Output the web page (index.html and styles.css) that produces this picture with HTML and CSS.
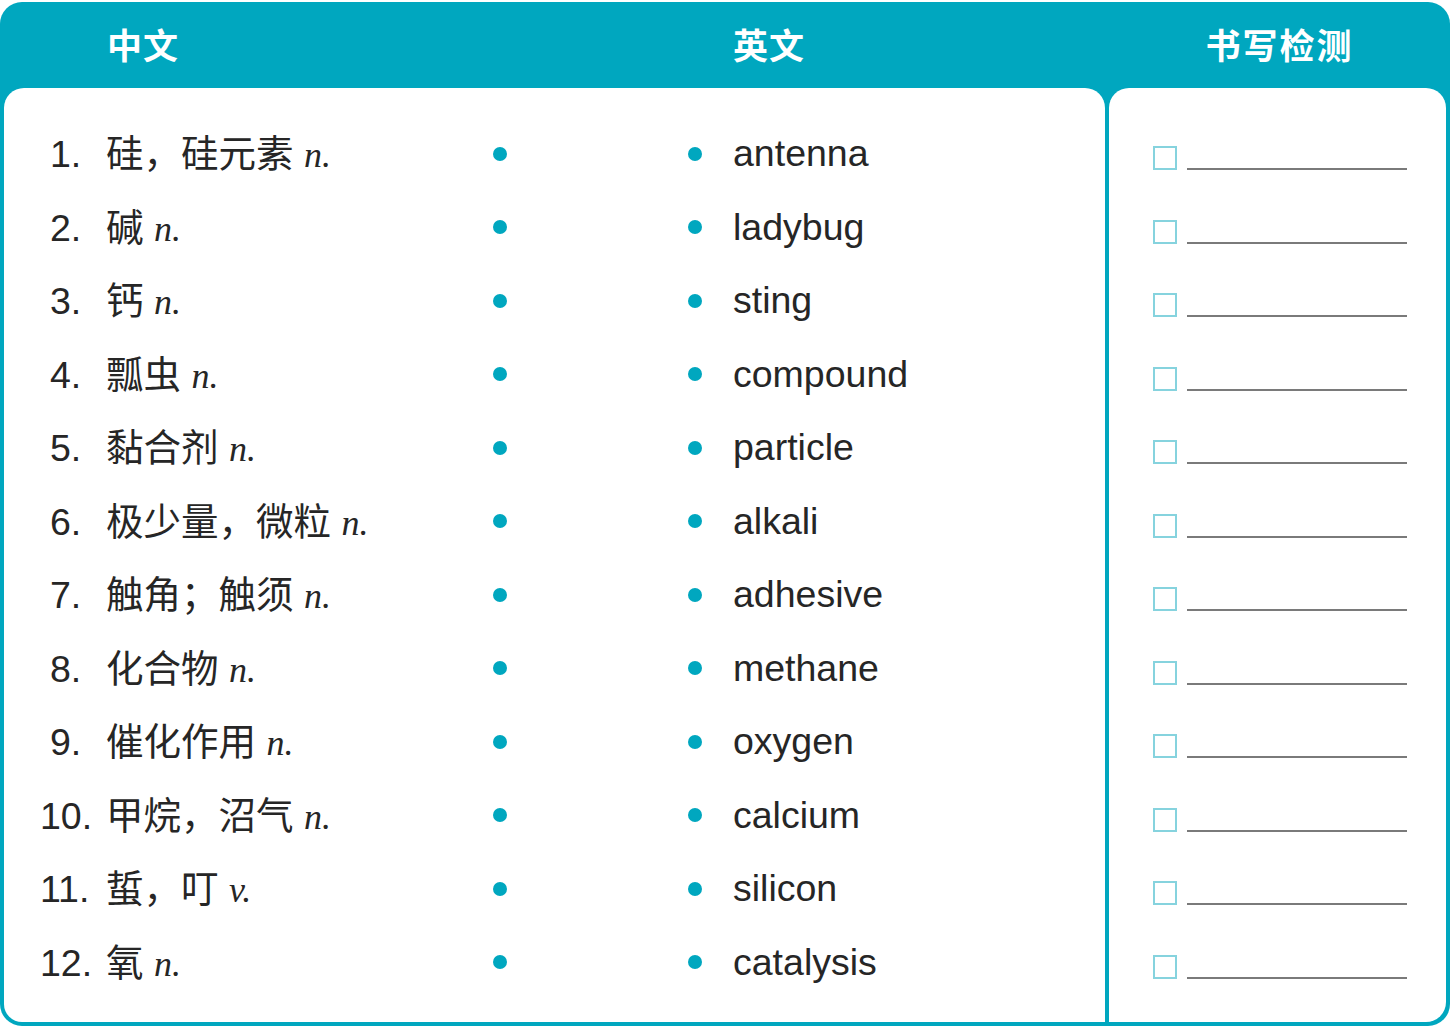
FILE: index.html
```html
<!DOCTYPE html>
<html lang="zh">
<head>
<meta charset="utf-8">
<title>词汇</title>
<link rel="stylesheet" href="styles.css">
</head>
<body>
<div class="card">
  <div class="head">
    <div class="head-left">
      <span class="h-cn">中文</span>
      <span class="h-en">英文</span>
    </div>
    <div class="head-right">书写检测</div>
  </div>
  <div class="body">
    <div class="panel left">
      <div class="row"><span class="cn"><span class="num one">1.</span>硅，硅元素 <i>n.</i></span><span class="dot"></span><span class="dot dot2"></span><span class="en">antenna</span></div>
      <div class="row"><span class="cn"><span class="num one">2.</span>碱 <i>n.</i></span><span class="dot"></span><span class="dot dot2"></span><span class="en">ladybug</span></div>
      <div class="row"><span class="cn"><span class="num one">3.</span>钙 <i>n.</i></span><span class="dot"></span><span class="dot dot2"></span><span class="en">sting</span></div>
      <div class="row"><span class="cn"><span class="num one">4.</span>瓢虫 <i>n.</i></span><span class="dot"></span><span class="dot dot2"></span><span class="en">compound</span></div>
      <div class="row"><span class="cn"><span class="num one">5.</span>黏合剂 <i>n.</i></span><span class="dot"></span><span class="dot dot2"></span><span class="en">particle</span></div>
      <div class="row"><span class="cn"><span class="num one">6.</span>极少量，微粒 <i>n.</i></span><span class="dot"></span><span class="dot dot2"></span><span class="en">alkali</span></div>
      <div class="row"><span class="cn"><span class="num one">7.</span>触角；触须 <i>n.</i></span><span class="dot"></span><span class="dot dot2"></span><span class="en">adhesive</span></div>
      <div class="row"><span class="cn"><span class="num one">8.</span>化合物 <i>n.</i></span><span class="dot"></span><span class="dot dot2"></span><span class="en">methane</span></div>
      <div class="row"><span class="cn"><span class="num one">9.</span>催化作用 <i>n.</i></span><span class="dot"></span><span class="dot dot2"></span><span class="en">oxygen</span></div>
      <div class="row"><span class="cn"><span class="num">10.</span>甲烷，沼气 <i>n.</i></span><span class="dot"></span><span class="dot dot2"></span><span class="en">calcium</span></div>
      <div class="row"><span class="cn"><span class="num">11.</span>蜇，叮 <i>v.</i></span><span class="dot"></span><span class="dot dot2"></span><span class="en">silicon</span></div>
      <div class="row"><span class="cn"><span class="num">12.</span>氧 <i>n.</i></span><span class="dot"></span><span class="dot dot2"></span><span class="en">catalysis</span></div>
    </div>
    <div class="panel right">
      <div class="check"><span class="box"></span><span class="line"></span></div>
      <div class="check"><span class="box"></span><span class="line"></span></div>
      <div class="check"><span class="box"></span><span class="line"></span></div>
      <div class="check"><span class="box"></span><span class="line"></span></div>
      <div class="check"><span class="box"></span><span class="line"></span></div>
      <div class="check"><span class="box"></span><span class="line"></span></div>
      <div class="check"><span class="box"></span><span class="line"></span></div>
      <div class="check"><span class="box"></span><span class="line"></span></div>
      <div class="check"><span class="box"></span><span class="line"></span></div>
      <div class="check"><span class="box"></span><span class="line"></span></div>
      <div class="check"><span class="box"></span><span class="line"></span></div>
      <div class="check"><span class="box"></span><span class="line"></span></div>
    </div>
  </div>
</div>
</body>
</html>
```
FILE: styles.css
```css
html, body {
  margin: 0;
  padding: 0;
  background: #ffffff;
}
body {
  padding-top: 2px;
  font-family: "Liberation Sans", "Noto Sans CJK SC", Arial, sans-serif;
}
.card {
  width: 1450px;
  height: 1024px;
  box-sizing: border-box;
  background: #00a7bf;
  border-radius: 22px;
  padding: 0 4px 4px 4px;
  display: flex;
  flex-direction: column;
}
.head {
  height: 86px;
  display: flex;
  color: #ffffff;
  font-family: "Noto Sans CJK SC", sans-serif;
  font-weight: 700;
  font-size: 35px;
  letter-spacing: 1px;
  flex: none;
}
.head-left {
  width: 1101px;
  display: flex;
  align-items: center;
  padding-bottom: 4px;
  box-sizing: border-box;
}
.h-cn {
  margin-left: 103px;
}
.h-en {
  margin-left: 554px;
}
.head-right {
  flex: 1;
  display: flex;
  align-items: center;
  justify-content: center;
  padding-bottom: 4px;
  padding-left: 8px;
  letter-spacing: 2px;
}
.body {
  flex: 1;
  display: flex;
  gap: 4px;
}
.panel {
  background: #ffffff;
  border-radius: 20px 20px 0 0;
}
.left {
  width: 1101px;
  border-bottom-left-radius: 18px;
  padding-top: 29px;
  box-sizing: border-box;
}
.right {
  flex: 1;
  border-bottom-right-radius: 20px;
  padding-top: 29px;
  box-sizing: border-box;
}
.row {
  height: 73.5px;
  display: flex;
  align-items: center;
  font-size: 37.5px;
  color: #262626;
}
.cn {
  width: 453px;
  margin-left: 36px;
  flex: none;
  white-space: nowrap;
  line-height: 50px;
  padding-top: 2px;
}
.num {
  display: inline-block;
  width: 66px;
  box-sizing: border-box;
}
.num.one {
  padding-left: 10px;
}
.cn i {
  font-family: "Liberation Serif", "Times New Roman", serif;
  font-style: italic;
  font-size: 36px;
}
.dot {
  width: 14px;
  height: 14px;
  border-radius: 50%;
  background: #00a7bf;
  flex: none;
}
.dot2 {
  margin-left: 181px;
}
.en {
  margin-left: 31px;
}
.check {
  height: 73.5px;
  display: flex;
  align-items: flex-start;
  padding-left: 44px;
  padding-top: 29px;
  box-sizing: border-box;
}
.box {
  width: 24px;
  height: 24px;
  box-sizing: border-box;
  border: 2px solid #86d3de;
  flex: none;
}
.line {
  width: 220px;
  height: 2px;
  background: #7a7a7a;
  margin-left: 10px;
  margin-top: 22px;
}
```
